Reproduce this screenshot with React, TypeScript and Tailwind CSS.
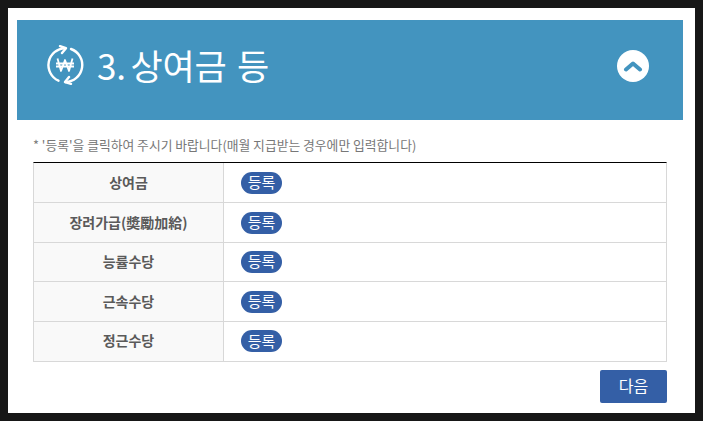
const rows = ["상여금", "장려가급(奬勵加給)", "능률수당", "근속수당", "정근수당"];
const font = { fontFamily: '"Noto Sans CJK KR", "Noto Sans", sans-serif' };

function WonIcon() {
  return (
    <svg width="40" height="40" viewBox="0 0 40 40" fill="none" stroke="white" strokeWidth="2.4" strokeLinecap="round" strokeLinejoin="round">
      <path d="M20 3.2 A17 17 0 0 0 13.5 35.7" />
      <path d="M26 4 A17 17 0 0 1 20.5 37" />
      <path d="M15 1.2 L21 3.2 L17 8" />
      <path d="M26 38.8 L20 37 L24 32" />
      <path d="M12.5 13.5 L16 26 L20 15 L24 26 L27.5 13.5 M11 18.5 H29 M11 21.5 H29" strokeWidth="1.8" strokeLinecap="butt" />
    </svg>
  );
}

export default function App() {
  return (
    <div className="h-[421px] w-[703px] overflow-hidden bg-[#171717] pl-2 pt-2" style={font}>
      <div className="flex h-[405px] w-[687px] flex-col bg-white pl-[9px] pr-3 pt-3">
        <header className="flex h-[100px] w-[666px] items-center bg-[#4394bf] pb-2 pl-[28px] pr-[34px]">
          <div className="mb-[3px]">
            <WonIcon />
          </div>
          <h1 className="mb-[4px] ml-[12px] flex-1 text-[35px] leading-none font-normal tracking-[-0.2px] [word-spacing:3px] text-white">
            <span className="[word-spacing:-3px]">3. </span>상여금 등
          </h1>
          <div className="flex h-8 w-8 items-center justify-center rounded-full bg-white">
            <svg width="20" height="12" viewBox="0 0 20 12" fill="none" stroke="#4394bf" strokeWidth="4" strokeLinecap="round" strokeLinejoin="round">
              <path d="M3 9.5 L10 3.5 L17 9.5" />
            </svg>
          </div>
        </header>
        <div className="flex flex-col pl-4">
          <p className="mt-[15px] h-[27px] text-[12.8px] leading-5 text-[#777]">* '등록'을 클릭하여 주시기 바랍니다(매월 지급받는 경우에만 입력합니다)</p>
          <div className="w-[634px] border-x border-b border-t border-x-[#d8d8d8] border-b-[#d8d8d8] border-t-black">
            {rows.map((r, i) => (
              <div key={r} className={`flex items-center ${i === 4 ? "h-[40px]" : "h-[39.45px]"} ${i ? "border-t border-[#d8d8d8]" : ""}`}>
                <div className="flex h-full w-[190px] items-center justify-center border-r border-[#d8d8d8] bg-[#f9f9f9] pb-[2px] text-sm font-bold text-[#5a5a5a]">{r}</div>
                <div className="pl-[17px]">
                  <span className="flex h-[22px] w-[41px] items-center justify-center rounded-full bg-[#345fa6] pb-[1px] text-[15px] text-white">등록</span>
                </div>
              </div>
            ))}
          </div>
          <div className="mt-2 flex w-[634px] justify-end">
            <button className="h-[33px] w-[67px] rounded-[2px] bg-[#345fa6] pb-[2px] text-base text-white">다음</button>
          </div>
        </div>
      </div>
    </div>
  );
}
